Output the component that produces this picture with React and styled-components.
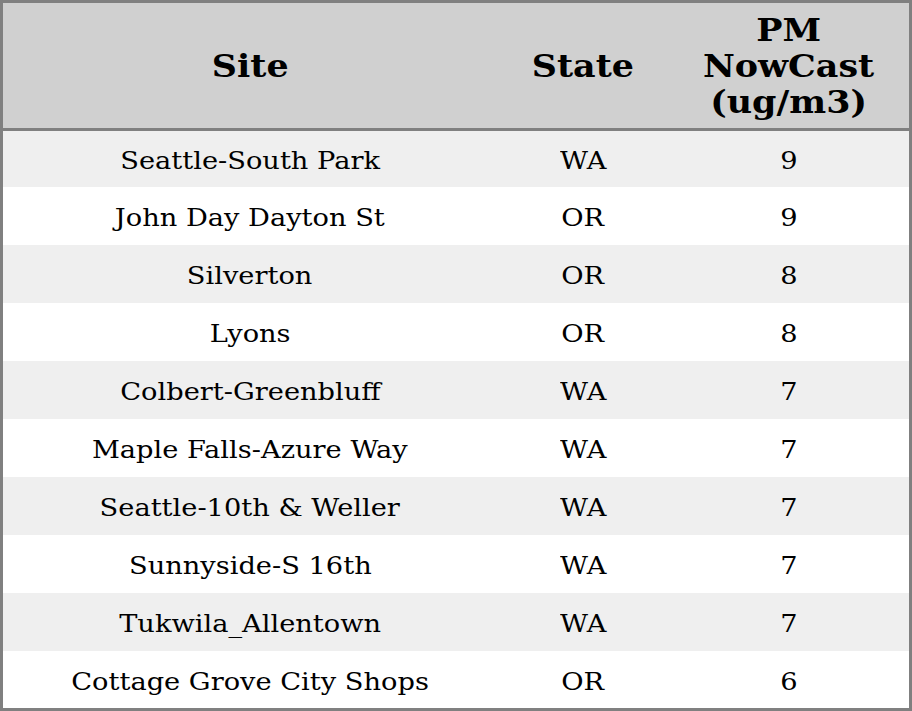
import React from 'react'
import styled, { createGlobalStyle } from 'styled-components'

const Global = createGlobalStyle`
html, body {
  margin: 0;
  padding: 0;
  background: #fff;
}
`

const Frame = styled.div`
box-sizing: border-box;
width: 912px;
height: 711px;
border: 3px solid #808080;
overflow: hidden;
font-family: "DejaVu Serif", serif;
color: #000;
`

const Grid = styled.div`
display: grid;
grid-template-columns: 494px 172px 240px;
`

const Head = styled(Grid)`
height: 125px;
background: #d0d0d0;
border-bottom: 3px solid #808080;
`

// text in the table is a touch wider than the font draws it
const Wide = styled.span`
display: inline-block;
transform: scaleX(1.09);
white-space: nowrap;
`

const HeadCell = styled.div`
display: flex;
align-items: center;
justify-content: center;
text-align: center;
font-weight: bold;
font-size: 32px;
line-height: 36px;
`

const Row = styled(Grid)`
height: 58px;
background: ${p => (p.$odd ? '#efefef' : '#fff')};
&:first-child {
  height: 56px;
}
`

const Cell = styled.div`
display: flex;
align-items: center;
justify-content: center;
font-size: 25px;
padding-top: 2px;
`

const rows = [
  ['Seattle-South Park', 'WA', 9],
  ['John Day Dayton St', 'OR', 9],
  ['Silverton', 'OR', 8],
  ['Lyons', 'OR', 8],
  ['Colbert-Greenbluff', 'WA', 7],
  ['Maple Falls-Azure Way', 'WA', 7],
  ['Seattle-10th & Weller', 'WA', 7],
  ['Sunnyside-S 16th', 'WA', 7],
  ['Tukwila_Allentown', 'WA', 7],
  ['Cottage Grove City Shops', 'OR', 6],
]

const App = () => {
  return (
    <>
      <Global />
      <Frame>
        <Head>
          <HeadCell><Wide>Site</Wide></HeadCell>
          <HeadCell><Wide>State</Wide></HeadCell>
          <HeadCell><Wide>PM<br />NowCast<br />(ug/m3)</Wide></HeadCell>
        </Head>
        <div>
          {rows.map((r, i) => (
            <Row key={r[0]} $odd={i % 2 === 0}>
              <Cell><Wide>{r[0]}</Wide></Cell>
              <Cell><Wide>{r[1]}</Wide></Cell>
              <Cell><Wide>{r[2]}</Wide></Cell>
            </Row>
          ))}
        </div>
      </Frame>
    </>
  )
}

export default App
